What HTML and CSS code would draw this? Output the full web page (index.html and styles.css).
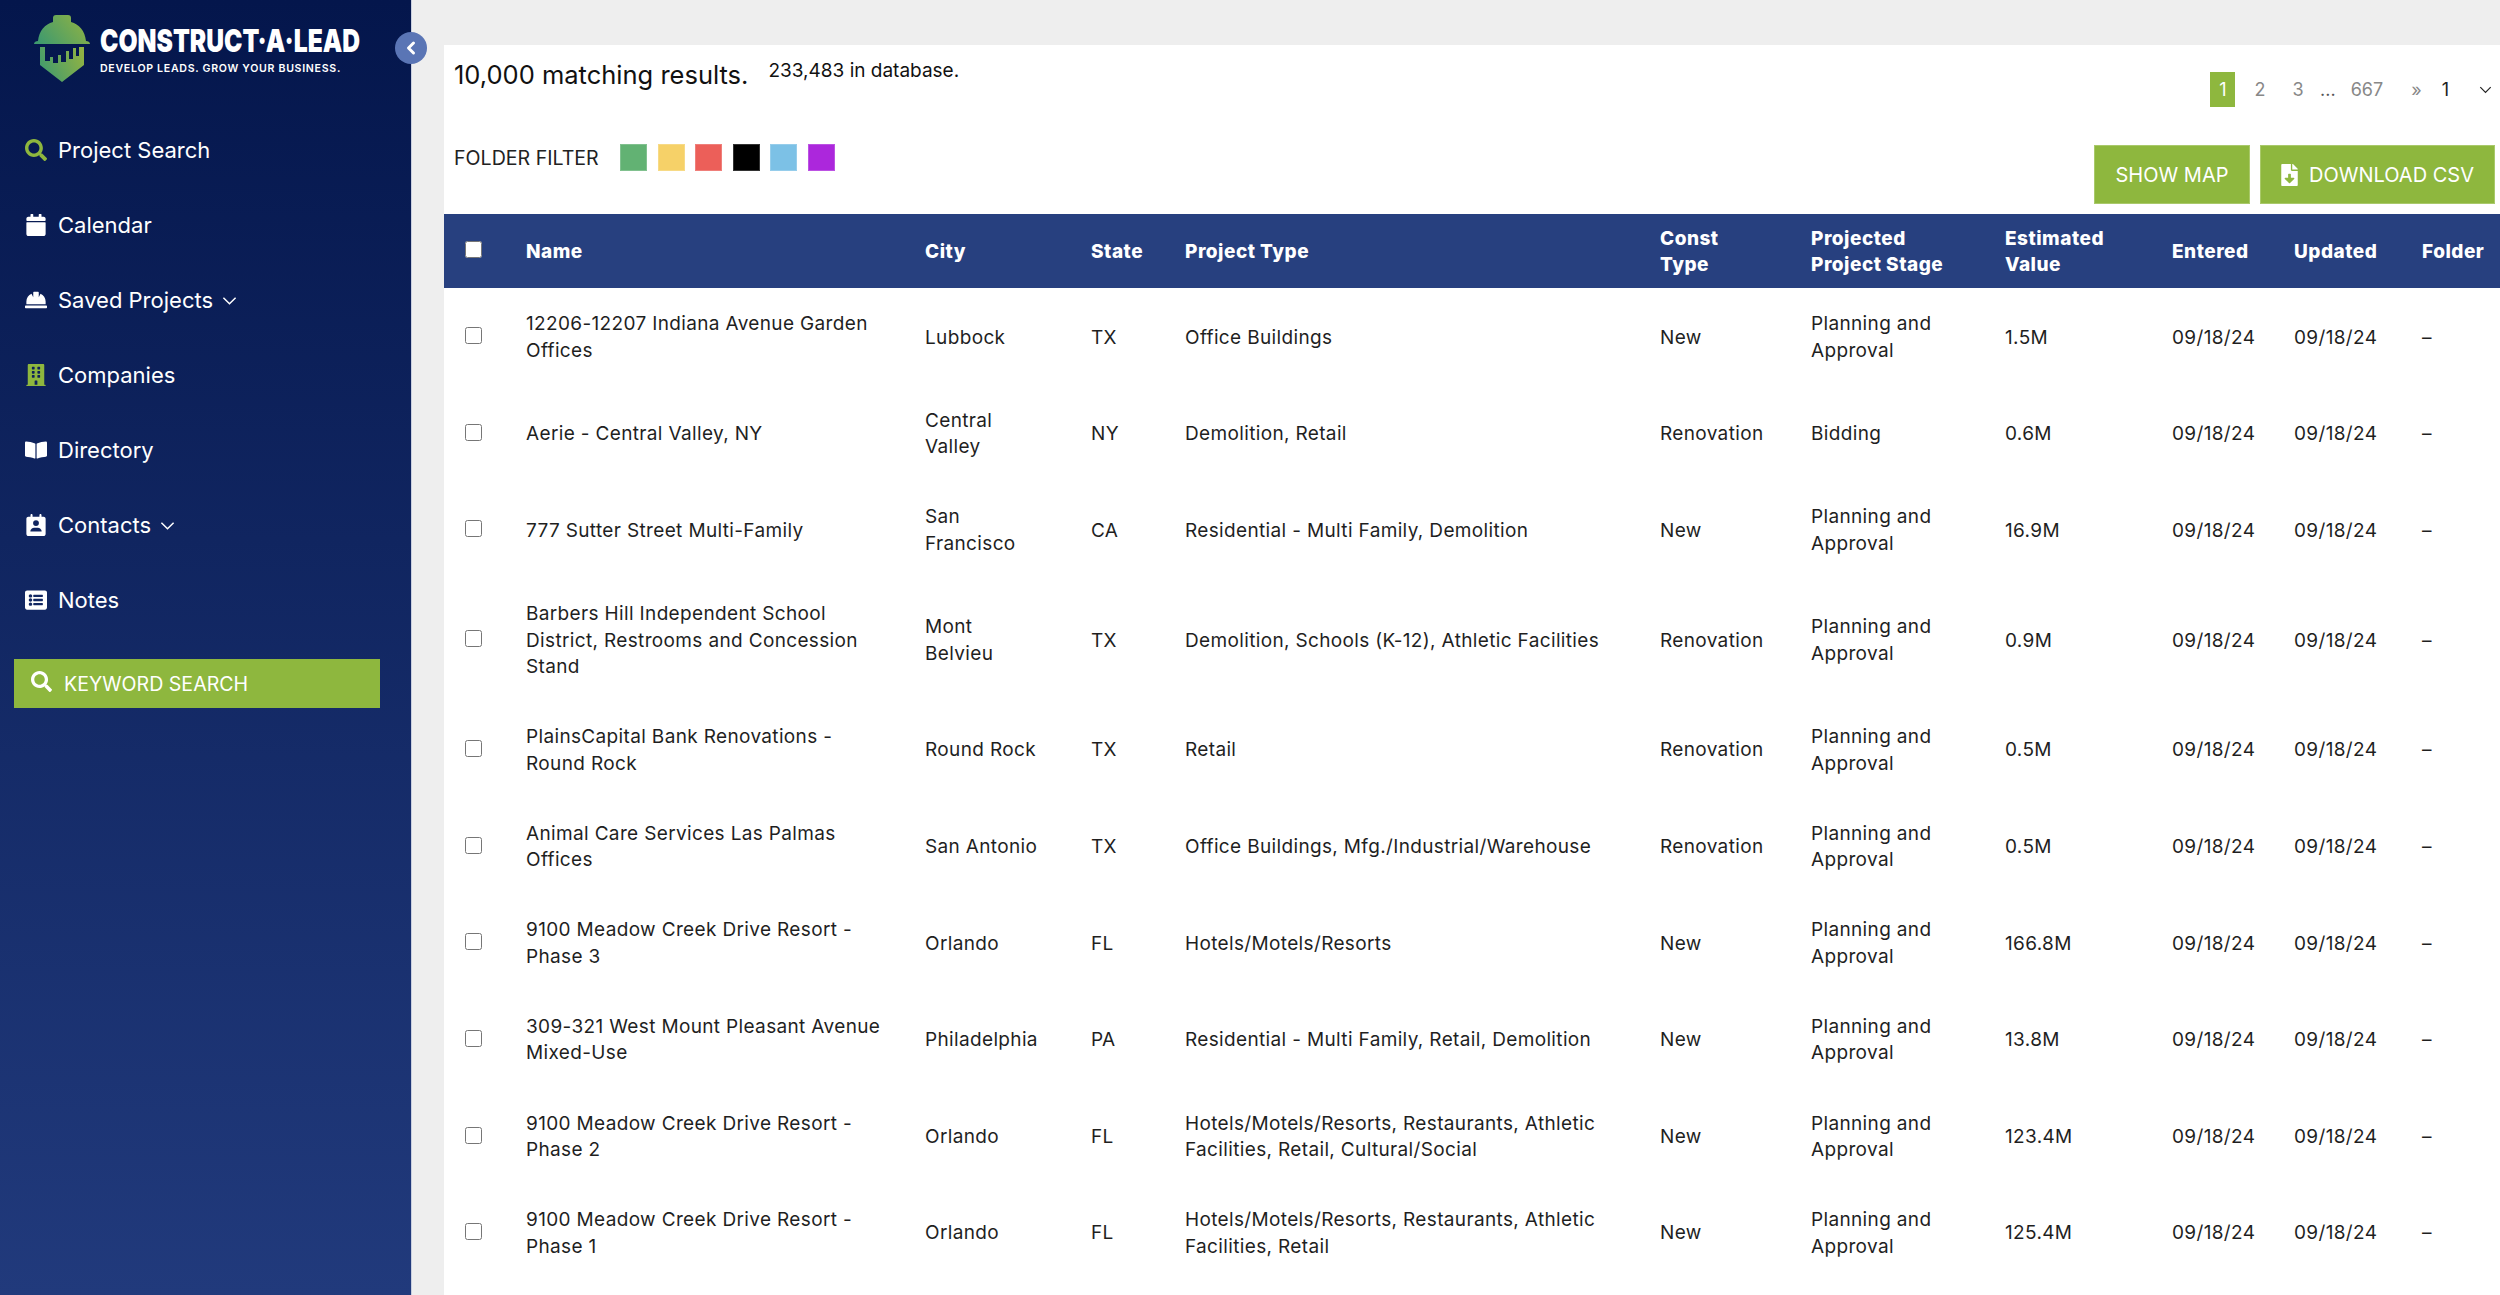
FILE: index.html
```html
<!DOCTYPE html>
<html lang="en">
<head>
    <meta charset="UTF-8"/>
    <title>Project Search - Construct-A-Lead</title>
    <link rel="stylesheet" href="styles.css">
</head>
<body>
<aside class="sidebar">
    <div class="logo">
        <svg class="logo-mark" viewBox="0 0 56 67">
            <defs>
                <linearGradient id="logoGrad" x1="0" y1="0.7" x2="1" y2="0.3">
                    <stop offset="0" stop-color="#3f9a6e"/>
                    <stop offset="1" stop-color="#8fb244"/>
                </linearGradient>
            </defs>
            <path fill="url(#logoGrad)" d="M0 29 C0 27 2 26 4 26 C5 16 11 9 19 7 L19 3 Q19 0 22 0 L34 0 Q37 0 37 3 L37 7 C45 9 51 16 52 26 C54 26 56 27 56 29 Z"/>
            <path fill="url(#logoGrad)" d="M6 32 L6 50 L28 67 L50 50 L50 32 L45 32 L45 41 L42 41 L42 33 L39 33 L39 44 L35 44 L35 36 L32 36 L32 47 L27 47 L27 40 L24 40 L24 48 L19 48 L19 42 L16 42 L16 46 L11 46 L11 32 Z"/>
        </svg>
        <div class="logo-text">
            <div class="logo-name"><span>CONSTRUCT·A·LEAD</span></div>
            <div class="logo-tag">DEVELOP LEADS. GROW YOUR BUSINESS.</div>
        </div>
    </div>

    <button class="collapse-btn" type="button">
        <svg viewBox="0 0 12 16"><path d="M8.5 3 L3.5 8 L8.5 13" fill="none" stroke="#fff" stroke-width="3" stroke-linecap="round" stroke-linejoin="round"/></svg>
    </button>

    <nav class="nav">
        <a class="nav-item">
            <svg class="nav-icon icon-green" viewBox="0 0 512 512"><path d="M505 442.7L405.3 343c-4.5-4.5-10.6-7-17-7H372c27.6-35.3 44-79.7 44-128C416 93.1 322.9 0 208 0S0 93.1 0 208s93.1 208 208 208c48.3 0 92.7-16.4 128-44v16.3c0 6.4 2.5 12.5 7 17l99.7 99.7c9.4 9.4 24.6 9.4 33.9 0l28.3-28.3c9.4-9.4 9.4-24.6.1-34zM208 336c-70.7 0-128-57.2-128-128 0-70.7 57.2-128 128-128 70.7 0 128 57.2 128 128 0 70.7-57.2 128-128 128z"/></svg>
            Project Search
        </a>
        <a class="nav-item">
            <svg class="nav-icon" viewBox="0 0 448 512"><path d="M12 192h424c6.6 0 12 5.4 12 12v260c0 26.5-21.5 48-48 48H48c-26.5 0-48-21.5-48-48V204c0-6.6 5.4-12 12-12zm436-44v-36c0-26.5-21.5-48-48-48h-48V12c0-6.6-5.4-12-12-12h-40c-6.6 0-12 5.4-12 12v52H160V12c0-6.6-5.4-12-12-12h-40c-6.6 0-12 5.4-12 12v52H48C21.5 64 0 85.5 0 112v36c0 6.6 5.4 12 12 12h424c6.6 0 12-5.4 12-12z"/></svg>
            Calendar
        </a>
        <a class="nav-item">
            <svg class="nav-icon" viewBox="0 0 512 512"><path d="M480 288c0-80.25-49.28-148.92-119.19-177.62L320 192V80a16 16 0 0 0-16-16h-96a16 16 0 0 0-16 16v112l-40.81-81.62C81.28 139.08 32 207.75 32 288v64h448zm16 96H16a16 16 0 0 0-16 16v32a16 16 0 0 0 16 16h480a16 16 0 0 0 16-16v-32a16 16 0 0 0-16-16z"/></svg>
            Saved Projects
            <svg class="nav-caret" viewBox="0 0 16 10"><path d="M1.5 1.5 L8 8 L14.5 1.5" fill="none" stroke="#fff" stroke-width="1.6"/></svg>
        </a>
        <a class="nav-item">
            <svg class="nav-icon icon-green" viewBox="0 0 448 512"><path d="M436 480h-20V24c0-13.255-10.745-24-24-24H56C42.745 0 32 10.745 32 24v456H12c-6.627 0-12 5.373-12 12v20h448v-20c0-6.627-5.373-12-12-12zM128 76c0-6.627 5.373-12 12-12h40c6.627 0 12 5.373 12 12v40c0 6.627-5.373 12-12 12h-40c-6.627 0-12-5.373-12-12V76zm0 96c0-6.627 5.373-12 12-12h40c6.627 0 12 5.373 12 12v40c0 6.627-5.373 12-12 12h-40c-6.627 0-12-5.373-12-12v-40zm52 148h-40c-6.627 0-12-5.373-12-12v-40c0-6.627 5.373-12 12-12h40c6.627 0 12 5.373 12 12v40c0 6.627-5.373 12-12 12zm76 160h-64v-84c0-6.627 5.373-12 12-12h40c6.627 0 12 5.373 12 12v84zm64-172c0 6.627-5.373 12-12 12h-40c-6.627 0-12-5.373-12-12v-40c0-6.627 5.373-12 12-12h40c6.627 0 12 5.373 12 12v40zm0-96c0 6.627-5.373 12-12 12h-40c-6.627 0-12-5.373-12-12v-40c0-6.627 5.373-12 12-12h40c6.627 0 12 5.373 12 12v40zm0-96c0 6.627-5.373 12-12 12h-40c-6.627 0-12-5.373-12-12V76c0-6.627 5.373-12 12-12h40c6.627 0 12 5.373 12 12v40z"/></svg>
            Companies
        </a>
        <a class="nav-item">
            <svg class="nav-icon" viewBox="0 0 576 512"><path d="M542.22 32.05c-54.8 3.11-163.72 14.43-230.96 55.59-4.64 2.84-7.27 7.89-7.27 13.17v363.87c0 11.55 12.63 18.85 23.28 13.49 69.18-34.82 169.23-44.32 218.7-46.92 16.89-.89 30.02-14.43 30.02-30.66V62.75c.01-17.71-15.35-31.74-33.77-30.7zM264.73 87.64C197.5 46.48 88.58 35.17 33.78 32.05 15.36 31.01 0 45.04 0 62.75V400.6c0 16.24 13.13 29.78 30.02 30.66 49.49 2.6 149.59 12.11 218.77 46.95 10.62 5.35 23.21-1.94 23.21-13.46V100.63c0-5.29-2.62-10.14-7.27-12.99z"/></svg>
            Directory
        </a>
        <a class="nav-item">
            <svg class="nav-icon" viewBox="0 0 448 512"><path fill-rule="evenodd" d="M48 64h48V24c0-13 10-24 24-24s24 11 24 24v40h160V24c0-13 10-24 24-24s24 11 24 24v40h48c26.500 0 48 21.500 48 48v352c0 26.500-21.500 48-48 48H48c-26.500 0-48-21.500-48-48V112c0-26.500 21.500-48 48-48zM224 144a68 68 0 1 0 0 136 68 68 0 0 0 0-136zM104 408h240c8 0 14-7 12-15-8-42-44-73-88-73h-88c-44 0-80 31-88 73-2 8 4 15 12 15z"/></svg>
            Contacts
            <svg class="nav-caret" viewBox="0 0 16 10"><path d="M1.5 1.5 L8 8 L14.5 1.5" fill="none" stroke="#fff" stroke-width="1.6"/></svg>
        </a>
        <a class="nav-item">
            <svg class="nav-icon" viewBox="0 0 512 512"><path d="M464 480H48c-26.51 0-48-21.49-48-48V80c0-26.51 21.49-48 48-48h416c26.51 0 48 21.49 48 48v352c0 26.51-21.49 48-48 48zM128 120c-22.091 0-40 17.909-40 40s17.909 40 40 40 40-17.909 40-40-17.909-40-40-40zm0 96c-22.091 0-40 17.909-40 40s17.909 40 40 40 40-17.909 40-40-17.909-40-40-40zm0 96c-22.091 0-40 17.909-40 40s17.909 40 40 40 40-17.909 40-40-17.909-40-40-40zm288-136v-32c0-6.627-5.373-12-12-12H204c-6.627 0-12 5.373-12 12v32c0 6.627 5.373 12 12 12h200c6.627 0 12-5.373 12-12zm0 96v-32c0-6.627-5.373-12-12-12H204c-6.627 0-12 5.373-12 12v32c0 6.627 5.373 12 12 12h200c6.627 0 12-5.373 12-12zm0 96v-32c0-6.627-5.373-12-12-12H204c-6.627 0-12 5.373-12 12v32c0 6.627 5.373 12 12 12h200c6.627 0 12-5.373 12-12z"/></svg>
            Notes
        </a>
    </nav>

    <button class="keyword-btn" type="button">
        <svg class="keyword-icon" viewBox="0 0 512 512"><path d="M505 442.7L405.3 343c-4.5-4.5-10.6-7-17-7H372c27.6-35.3 44-79.7 44-128C416 93.1 322.9 0 208 0S0 93.1 0 208s93.1 208 208 208c48.3 0 92.7-16.4 128-44v16.3c0 6.4 2.5 12.5 7 17l99.7 99.7c9.4 9.4 24.6 9.4 33.9 0l28.3-28.3c9.4-9.4 9.4-24.6.1-34zM208 336c-70.7 0-128-57.2-128-128 0-70.7 57.2-128 128-128 70.7 0 128 57.2 128 128 0 70.7-57.2 128-128 128z"/></svg>
        KEYWORD SEARCH
    </button>
</aside>

<main class="content">
    <div class="panel">
        <div class="toolbar">
            <div class="toolbar-left">
                <div class="result-counts">
                    <span class="count-main">10,000 matching results.</span>
                    <span class="count-total">233,483 in database.</span>
                </div>
                <div class="folder-filter">
                    <span class="folder-label">FOLDER FILTER</span>
                    <span class="swatch swatch-green"></span>
                    <span class="swatch swatch-yellow"></span>
                    <span class="swatch swatch-red"></span>
                    <span class="swatch swatch-black"></span>
                    <span class="swatch swatch-blue"></span>
                    <span class="swatch swatch-purple"></span>
                </div>
            </div>
            <div class="toolbar-right">
                <div class="pagination">
                    <span class="page page-current">1</span>
                    <span class="page page-2">2</span>
                    <span class="page page-3">3</span>
                    <span class="page-dots">...</span>
                    <span class="page page-last">667</span>
                    <span class="page-next">»</span>
                    <span class="page-select">1</span>
                    <svg class="page-caret" viewBox="0 0 16 10"><path d="M1.5 1.5 L8 8 L14.5 1.5" fill="none" stroke="#222" stroke-width="1.5"/></svg>
                </div>
                <div class="actions">
                    <button class="green-btn map-btn" type="button">SHOW MAP</button>
                    <button class="green-btn csv-btn" type="button">
                        <svg class="csv-icon" viewBox="0 0 384 512"><path d="M224 136V0H24C10.7 0 0 10.7 0 24v464c0 13.3 10.7 24 24 24h336c13.3 0 24-10.7 24-24V160H248c-13.2 0-24-10.8-24-24zm76.45 211.36l-96.42 95.7c-6.65 6.61-17.39 6.61-24.04 0l-96.42-95.7C73.42 337.29 80.54 320 94.82 320H160v-80c0-8.84 7.16-16 16-16h32c8.84 0 16 7.16 16 16v80h65.18c14.28 0 21.4 17.29 11.27 27.36zM377 105L279.1 7c-4.5-4.5-10.6-7-17-7H256v128h128v-6.1c0-6.3-2.5-12.4-7-16.9z"/></svg>
                        DOWNLOAD CSV
                    </button>
                </div>
            </div>
        </div>

        <table class="projects">
            <colgroup>
                <col class="col-check">
                <col class="col-name">
                <col class="col-city">
                <col class="col-state">
                <col class="col-type">
                <col class="col-const">
                <col class="col-stage">
                <col class="col-value">
                <col class="col-entered">
                <col class="col-updated">
                <col class="col-folder">
            </colgroup>
            <thead>
                <tr>
                    <th class="cell-check"><input class="head-check" type="checkbox"></th>
                    <th>Name</th>
                    <th>City</th>
                    <th>State</th>
                    <th>Project Type</th>
                    <th>Const<br>Type</th>
                    <th>Projected<br>Project Stage</th>
                    <th>Estimated<br>Value</th>
                    <th>Entered</th>
                    <th>Updated</th>
                    <th>Folder</th>
                </tr>
            </thead>
            <tbody>
                <tr>
                    <td class="cell-check"><input type="checkbox"></td>
                    <td>12206-12207 Indiana Avenue Garden<br>Offices</td>
                    <td>Lubbock</td>
                    <td>TX</td>
                    <td>Office Buildings</td>
                    <td>New</td>
                    <td>Planning and<br>Approval</td>
                    <td>1.5M</td>
                    <td>09/18/24</td>
                    <td>09/18/24</td>
                    <td>–</td>
                </tr>
                <tr>
                    <td class="cell-check"><input type="checkbox"></td>
                    <td>Aerie - Central Valley, NY</td>
                    <td>Central<br>Valley</td>
                    <td>NY</td>
                    <td>Demolition, Retail</td>
                    <td>Renovation</td>
                    <td>Bidding</td>
                    <td>0.6M</td>
                    <td>09/18/24</td>
                    <td>09/18/24</td>
                    <td>–</td>
                </tr>
                <tr>
                    <td class="cell-check"><input type="checkbox"></td>
                    <td>777 Sutter Street Multi-Family</td>
                    <td>San<br>Francisco</td>
                    <td>CA</td>
                    <td>Residential - Multi Family, Demolition</td>
                    <td>New</td>
                    <td>Planning and<br>Approval</td>
                    <td>16.9M</td>
                    <td>09/18/24</td>
                    <td>09/18/24</td>
                    <td>–</td>
                </tr>
                <tr>
                    <td class="cell-check"><input type="checkbox"></td>
                    <td>Barbers Hill Independent School<br>District, Restrooms and Concession<br>Stand</td>
                    <td>Mont<br>Belvieu</td>
                    <td>TX</td>
                    <td>Demolition, Schools (K-12), Athletic Facilities</td>
                    <td>Renovation</td>
                    <td>Planning and<br>Approval</td>
                    <td>0.9M</td>
                    <td>09/18/24</td>
                    <td>09/18/24</td>
                    <td>–</td>
                </tr>
                <tr>
                    <td class="cell-check"><input type="checkbox"></td>
                    <td>PlainsCapital Bank Renovations -<br>Round Rock</td>
                    <td>Round Rock</td>
                    <td>TX</td>
                    <td>Retail</td>
                    <td>Renovation</td>
                    <td>Planning and<br>Approval</td>
                    <td>0.5M</td>
                    <td>09/18/24</td>
                    <td>09/18/24</td>
                    <td>–</td>
                </tr>
                <tr>
                    <td class="cell-check"><input type="checkbox"></td>
                    <td>Animal Care Services Las Palmas<br>Offices</td>
                    <td>San Antonio</td>
                    <td>TX</td>
                    <td>Office Buildings, Mfg./Industrial/Warehouse</td>
                    <td>Renovation</td>
                    <td>Planning and<br>Approval</td>
                    <td>0.5M</td>
                    <td>09/18/24</td>
                    <td>09/18/24</td>
                    <td>–</td>
                </tr>
                <tr>
                    <td class="cell-check"><input type="checkbox"></td>
                    <td>9100 Meadow Creek Drive Resort -<br>Phase 3</td>
                    <td>Orlando</td>
                    <td>FL</td>
                    <td>Hotels/Motels/Resorts</td>
                    <td>New</td>
                    <td>Planning and<br>Approval</td>
                    <td>166.8M</td>
                    <td>09/18/24</td>
                    <td>09/18/24</td>
                    <td>–</td>
                </tr>
                <tr>
                    <td class="cell-check"><input type="checkbox"></td>
                    <td>309-321 West Mount Pleasant Avenue<br>Mixed-Use</td>
                    <td>Philadelphia</td>
                    <td>PA</td>
                    <td>Residential - Multi Family, Retail, Demolition</td>
                    <td>New</td>
                    <td>Planning and<br>Approval</td>
                    <td>13.8M</td>
                    <td>09/18/24</td>
                    <td>09/18/24</td>
                    <td>–</td>
                </tr>
                <tr>
                    <td class="cell-check"><input type="checkbox"></td>
                    <td>9100 Meadow Creek Drive Resort -<br>Phase 2</td>
                    <td>Orlando</td>
                    <td>FL</td>
                    <td>Hotels/Motels/Resorts, Restaurants, Athletic<br>Facilities, Retail, Cultural/Social</td>
                    <td>New</td>
                    <td>Planning and<br>Approval</td>
                    <td>123.4M</td>
                    <td>09/18/24</td>
                    <td>09/18/24</td>
                    <td>–</td>
                </tr>
                <tr>
                    <td class="cell-check"><input type="checkbox"></td>
                    <td>9100 Meadow Creek Drive Resort -<br>Phase 1</td>
                    <td>Orlando</td>
                    <td>FL</td>
                    <td>Hotels/Motels/Resorts, Restaurants, Athletic<br>Facilities, Retail</td>
                    <td>New</td>
                    <td>Planning and<br>Approval</td>
                    <td>125.4M</td>
                    <td>09/18/24</td>
                    <td>09/18/24</td>
                    <td>–</td>
                </tr>
            </tbody>
        </table>
    </div>
</main>
</body>
</html>
```
FILE: styles.css
```css
/* Base styles */
* {
    box-sizing: border-box;
}

body {
    margin: 0;
    height: 100vh;
    overflow: hidden;
    display: flex;
    font-family: Inter, "Open Sans", sans-serif;
    background-color: #eeeeee;
    color: #222222;
}

/* Sidebar */
.sidebar {
    position: relative;
    flex: 0 0 412px;
    min-width: 0;
    padding-top: 15px;
    background: linear-gradient(to bottom, #04164c, #213a7c);
    border-right: 1px solid #c9cfdf;
}

.logo {
    display: flex;
    align-items: flex-start;
    gap: 10px;
    padding-left: 34px;
}

.logo-mark {
    flex: none;
    width: 56px;
    height: 67px;
}

.logo-text {
    width: 270px;
    padding-top: 11px;
    color: #ffffff;
}

.logo-name {
    font-size: 32px;
    line-height: 30px;
    font-weight: 900;
    white-space: nowrap;
}

.logo-name span {
    display: inline-block;
    transform: scaleX(0.77);
    transform-origin: left center;
}

.logo-tag {
    margin-top: 6px;
    font-size: 10.6px;
    font-weight: 600;
    letter-spacing: 0.7px;
    white-space: nowrap;
}

.collapse-btn {
    position: absolute;
    top: 32px;
    left: 395px;
    width: 32px;
    height: 32px;
    padding: 0;
    border: none;
    border-radius: 50%;
    background-color: #5a75b5;
    display: flex;
    align-items: center;
    justify-content: center;
}

.collapse-btn svg {
    width: 12px;
    height: 16px;
}

.nav {
    margin-top: 30px;
    display: flex;
    flex-direction: column;
}

.nav-item {
    height: 75px;
    display: flex;
    align-items: center;
    padding-left: 25px;
    color: #ffffff;
    font-size: 22px;
}

.nav-icon {
    width: 22px;
    height: 22px;
    margin-right: 11px;
    fill: #ffffff;
}

.icon-green {
    fill: #8eb73e;
}

.nav-caret {
    width: 15px;
    height: 10px;
    margin-left: 9px;
    margin-top: 2px;
}

.keyword-btn {
    display: flex;
    align-items: center;
    width: 366px;
    height: 49px;
    margin: 22px 0 0 14px;
    padding: 0 0 0 17px;
    border: none;
    background-color: #8eb73e;
    color: #ffffff;
    font-family: inherit;
    font-size: 19.6px;
}

.keyword-icon {
    width: 21px;
    height: 21px;
    margin-right: 12px;
    margin-top: -5px;
    fill: #ffffff;
}

/* Main area */
.content {
    flex: 1;
    min-width: 0;
    padding: 45px 0 0 32px;
}

.panel {
    background-color: #ffffff;
    height: 100%;
}

.toolbar {
    height: 169px;
    display: flex;
    justify-content: space-between;
}

.toolbar-left {
    padding: 14px 0 0 10px;
}

.result-counts {
    display: flex;
    align-items: flex-start;
    gap: 20px;
    color: #111111;
}

.count-main {
    font-size: 25.5px;
    line-height: 32px;
}

.count-total {
    font-size: 19px;
    line-height: 24px;
}

.folder-filter {
    display: flex;
    align-items: center;
    margin-top: 53px;
}

.folder-label {
    width: 166px;
    font-size: 19.6px;
    white-space: nowrap;
}

.swatch {
    width: 27px;
    height: 27px;
    margin-right: 10.5px;
    border: 1px solid rgba(255, 255, 255, 0.2);
}

.swatch-green { background-color: #62b273; }
.swatch-yellow { background-color: #f6d168; }
.swatch-red { background-color: #ec5f59; }
.swatch-black { background-color: #000000; border-color: #333333; }
.swatch-blue { background-color: #7cc1e6; }
.swatch-purple { background-color: #ac27dc; }

.toolbar-right {
    display: flex;
    flex-direction: column;
    align-items: flex-end;
    padding: 27px 5px 0 0;
}

/* Pagination */
.pagination {
    display: flex;
    align-items: center;
    height: 35px;
    margin-right: 3px;
    font-size: 18px;
    color: #888888;
}

.page-current {
    width: 25px;
    height: 35px;
    line-height: 35px;
    text-align: center;
    background-color: #8eb73e;
    color: #ffffff;
}

.page-2 { margin-left: 19px; }
.page-3 { margin-left: 27px; }
.page-dots { margin-left: 16.5px; color: #555555; }
.page-last { margin-left: 15px; }
.page-next { margin-left: 28px; }

.page-select {
    margin-left: 20px;
    color: #222222;
}

.page-caret {
    width: 13px;
    height: 8px;
    margin-left: 30px;
}

.actions {
    display: flex;
    gap: 10px;
    margin-top: 38px;
}

.green-btn {
    height: 59px;
    border: 1px solid #a9c96a;
    background-color: #8eb73e;
    color: #ffffff;
    font-family: inherit;
    font-size: 20px;
    display: flex;
    align-items: center;
    justify-content: center;
    white-space: nowrap;
}

.map-btn {
    width: 156px;
}

.csv-btn {
    width: 235px;
}

.csv-icon {
    width: 17px;
    height: 22px;
    margin-right: 11px;
    fill: #ffffff;
}

/* Results table */
.projects {
    width: 100%;
    table-layout: fixed;
    border-collapse: collapse;
    font-size: 19px;
    line-height: 26.5px;
    letter-spacing: 0.35px;
}

.col-check { width: 82px; }
.col-name { width: 399px; }
.col-city { width: 166px; }
.col-state { width: 94px; }
.col-type { width: 475px; }
.col-const { width: 151px; }
.col-stage { width: 194px; }
.col-value { width: 167px; }
.col-entered { width: 122px; }
.col-updated { width: 128px; }

.projects th {
    height: 74px;
    padding: 2px 0 0;
    background-color: #27407f;
    color: #ffffff;
    font-weight: 800;
    letter-spacing: 0.5px;
    text-align: left;
    vertical-align: middle;
    white-space: nowrap;
}

.projects td {
    padding: 23.3px 0 20.3px;
    vertical-align: middle;
    white-space: nowrap;
    color: #1f1f1f;
}

.projects .cell-check {
    padding-left: 21px;
}

.cell-check input {
    display: block;
    width: 17px;
    height: 17px;
    margin: -4px 0 0;
}

.head-check {
    position: relative;
    top: -1px;
}
```
